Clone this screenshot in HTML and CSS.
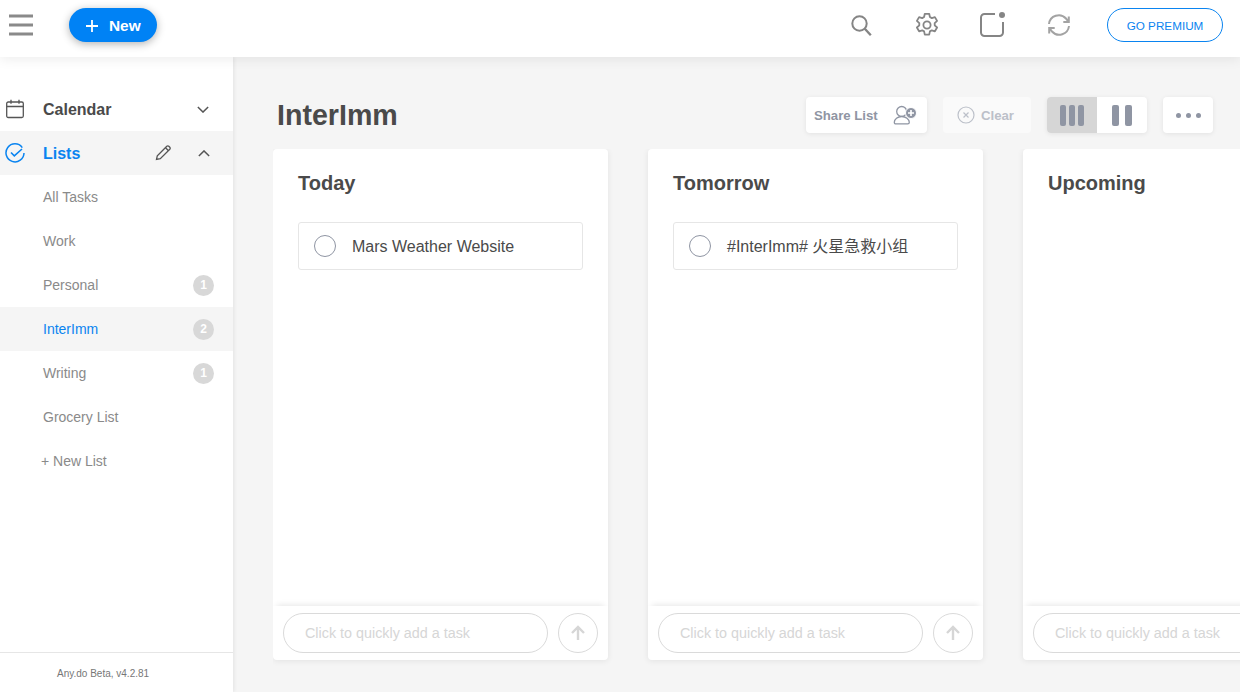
FILE: index.html
```html
<!doctype html>
<html>
    <head>
        <title>Any.do</title>
        <meta charset="utf-8">
        <link rel="stylesheet" href="styles.css">
    </head>
    <body>
        <div id="topbar">
            <svg class="burger" width="26" height="24" viewBox="0 0 26 24">
                <path d="M1 3h24M1 12h24M1 21h24" stroke="#8a8a8a" stroke-width="3" fill="none"/>
            </svg>
            <div class="new-button">
                <svg width="14" height="14" viewBox="0 0 14 14"><path d="M7 1v12M1 7h12" stroke="#fff" stroke-width="1.8" fill="none"/></svg>
                <span>New</span>
            </div>
            <div class="top-icons">
                <svg class="search-icon" width="24" height="24" viewBox="0 0 24 24" fill="none" stroke="#858585" stroke-width="2">
                    <circle cx="10.5" cy="10.5" r="7.2"/>
                    <path d="M15.8 15.8l6 6.400" stroke-width="2.400"/>
                </svg>
                <svg class="gear-icon" width="26" height="26" viewBox="0 0 26 26" fill="none" stroke="#858585" stroke-width="1.800" stroke-linejoin="round">
                    <path d="M10.8 1.8h4.4l.7 3.2 1.9 1.1 3.1-1 2.2 3.8-2.4 2.2v2.2l2.4 2.2-2.2 3.8-3.1-1-1.9 1.1-.7 3.2h-4.4l-.7-3.2-1.9-1.1-3.1 1-2.2-3.8 2.4-2.2v-2.2l-2.4-2.2 2.2-3.8 3.1 1 1.9-1.1z"/>
                    <circle cx="13" cy="13" r="3.6"/>
                </svg>
                <svg class="note-icon" width="27" height="26" viewBox="0 0 27 26" fill="none">
                    <path d="M16 2H5.500A3.500 3.500 0 0 0 2 5.500v15A3.500 3.500 0 0 0 5.500 24h15a3.500 3.500 0 0 0 3.500-3.500V10" stroke="#858585" stroke-width="2"/>
                    <circle cx="23" cy="3" r="3" fill="#858585"/>
                </svg>
                <svg class="sync-icon" width="24" height="24" viewBox="0 0 24 24" fill="none" stroke="#a3a3a3" stroke-width="2">
                    <path d="M2 11A9.800 9.800 0 0 1 19 5.500l2.500 3"/>
                    <path d="M22 13A9.800 9.800 0 0 1 5 18.500l-2.500-3"/>
                    <path d="M21.800 3.500v5.500h-5.500"/>
                    <path d="M2.200 20.500V15h5.500"/>
                </svg>
                <div class="premium">GO PREMIUM</div>
            </div>
        </div>
        <div id="page">
            <div id="sidebar">
                <div class="nav">
                    <div class="nav-head">
                        <svg class="head-icon" width="20" height="20" viewBox="0 0 20 20" fill="none" stroke="#555" stroke-width="1.300">
                            <rect x="1.700" y="3" width="16.600" height="15.500" rx="1.500"/>
                            <path d="M1.700 7.500h16.600M6 .8v4M14 .8v4"/>
                        </svg>
                        <span class="head-label">Calendar</span>
                        <svg class="chev" width="12" height="7" viewBox="0 0 14 8" fill="none" stroke="#555" stroke-width="1.700"><path d="M1 1l6 6 6-6"/></svg>
                    </div>
                    <div class="nav-head on">
                        <svg class="head-icon" width="20" height="20" viewBox="0 0 20 20" fill="none" stroke="#0a84f0" stroke-width="1.500">
                            <path d="M17.300 4.600A9 9 0 1 0 19 10"/>
                            <path d="M6 9.500l3.300 3.300L17 6" stroke-width="1.600"/>
                        </svg>
                        <span class="head-label">Lists</span>
                        <svg class="pencil" width="16" height="16" viewBox="0 0 16 16" fill="none" stroke="#555" stroke-width="1.300">
                            <path d="M1.500 14.500l.8-3.800L11.800 1.200a1.400 1.400 0 0 1 2 0l1 1a1.400 1.400 0 0 1 0 2L5.300 13.700z"/>
                            <path d="M10.500 2.700l2.800 2.800"/>
                        </svg>
                        <svg class="chev" width="12" height="7" viewBox="0 0 14 8" fill="none" stroke="#555" stroke-width="1.700"><path d="M1 7l6-6 6 6"/></svg>
                    </div>
                    <div class="nav-item">All Tasks</div>
                    <div class="nav-item">Work</div>
                    <div class="nav-item">Personal <span class="count">1</span></div>
                    <div class="nav-item on">InterImm <span class="count">2</span></div>
                    <div class="nav-item">Writing <span class="count">1</span></div>
                    <div class="nav-item">Grocery List</div>
                    <div class="nav-item new-list">+ New List</div>
                </div>
                <div class="version">Any.do Beta, v4.2.81</div>
            </div>
            <div id="main">
                <div class="main-head">
                    <div class="list-title">InterImm</div>
                    <div class="tool share">
                        Share List
                        <svg width="24" height="20" viewBox="0 0 24 20" fill="none" stroke="#8f95a3" stroke-width="1.300">
                            <circle cx="8.700" cy="6.500" r="5"/>
                            <path d="M1.300 17.300c0-3.300 3.400-5.800 7.400-5.800s7.600 2.500 7.600 5.800c0 1-.6 1.600-1.600 1.600H2.900c-1 0-1.600-.6-1.600-1.600z" fill="#fff"/>
                            <circle cx="18" cy="8" r="5.500" fill="#8f95a3" stroke="#fff" stroke-width="1"/>
                            <path d="M18 5v6M15 8h6" stroke="#fff" stroke-width="1.600"/>
                        </svg>
                    </div>
                    <div class="tool clear">
                        <svg width="18" height="18" viewBox="0 0 18 18" fill="none" stroke="#bcc0c9" stroke-width="1.200">
                            <circle cx="9" cy="9" r="8"/>
                            <path d="M6.500 6.500l5 5M11.500 6.500l-5 5"/>
                        </svg>
                        Clear
                    </div>
                    <div class="view-switch">
                        <div class="view on"><i></i><i></i><i></i></div>
                        <div class="view two"><i></i><i></i></div>
                    </div>
                    <div class="tool more"><i></i><i></i><i></i></div>
                </div>
                <div class="board">
                    <div class="column">
                        <div class="column-title">Today</div>
                        <div class="tasks">
                            <div class="task"><span class="check"></span><span class="task-text">Mars Weather Website</span></div>
                        </div>
                        <div class="quick-add">
                            <div class="quick-input">Click to quickly add a task</div>
                            <div class="quick-send">
                                <svg width="16" height="16" viewBox="0 0 16 16" fill="none" stroke="#d6d6d6" stroke-width="2.400"><path d="M8 15V2M2 8l6-6 6 6"/></svg>
                            </div>
                        </div>
                    </div>
                    <div class="column">
                        <div class="column-title">Tomorrow</div>
                        <div class="tasks">
                            <div class="task"><span class="check"></span><span class="task-text">#InterImm# 火星急救小组</span></div>
                        </div>
                        <div class="quick-add">
                            <div class="quick-input">Click to quickly add a task</div>
                            <div class="quick-send">
                                <svg width="16" height="16" viewBox="0 0 16 16" fill="none" stroke="#d6d6d6" stroke-width="2.400"><path d="M8 15V2M2 8l6-6 6 6"/></svg>
                            </div>
                        </div>
                    </div>
                    <div class="column">
                        <div class="column-title">Upcoming</div>
                        <div class="tasks"></div>
                        <div class="quick-add">
                            <div class="quick-input">Click to quickly add a task</div>
                            <div class="quick-send">
                                <svg width="16" height="16" viewBox="0 0 16 16" fill="none" stroke="#d6d6d6" stroke-width="2.400"><path d="M8 15V2M2 8l6-6 6 6"/></svg>
                            </div>
                        </div>
                    </div>
                </div>
            </div>
        </div>
    </body>
</html>
```

FILE: styles.css
```css
html, body {
    height: 100%;
}
body {
    margin: 0;
    overflow: hidden;
    display: flex;
    flex-direction: column;
    font-family: "Liberation Sans", "Noto Sans CJK SC", Arial, sans-serif;
    color: #4a4a4a;
    background-color: #F5F5F5;
}
svg {
    display: block;
    flex-shrink: 0;
}
#topbar {
    position: relative;
    z-index: 2;
    flex: 0 0 57px;
    display: flex;
    align-items: center;
    background-color: #FFFFFF;
    box-shadow: 0px 2px 12px rgba(0, 0, 0, 0.08);
}
.burger {
    margin: -7px 0 0 8px;
}
.new-button {
    display: flex;
    align-items: center;
    gap: 10px;
    height: 34px;
    width: 88px;
    margin: -7px 0 0 35px;
    padding: 1px 0 0 16px;
    box-sizing: border-box;
    border-radius: 17px;
    background-color: #0082F5;
    box-shadow: 0px 2px 9px rgba(0, 0, 0, 0.3);
    font-size: 15.4px;
    font-weight: bold;
    color: #FFFFFF;
}
.top-icons {
    margin-left: auto;
    display: flex;
    align-items: center;
    margin-top: -7px;
    padding-right: 17px;
}
.search-icon {
    margin-right: 41px;
}
.gear-icon {
    margin-right: 39px;
}
.note-icon {
    margin-right: 41px;
}
.sync-icon {
    margin-right: 36px;
}
.premium {
    width: 116px;
    height: 34px;
    line-height: 33px;
    box-sizing: border-box;
    border: 1px solid #0A84F0;
    border-radius: 17px;
    text-align: center;
    font-size: 11.7px;
    color: #0A84F0;
}
#page {
    flex: 1;
    display: flex;
    min-height: 0;
}
#sidebar {
    flex: 0 0 233px;
    display: flex;
    flex-direction: column;
    background-color: #FFFFFF;
    box-shadow: 1px 0px 4px rgba(0, 0, 0, 0.08);
    position: relative;
    z-index: 1;
}
.nav {
    flex: 1;
    padding-top: 30px;
}
.nav-head {
    display: flex;
    align-items: center;
    height: 44px;
    padding-left: 5px;
}
.nav-head.on {
    background-color: #F5F5F5;
    color: #0A84F0;
}
.head-label {
    margin: 2px 0 0 18px;
    font-size: 16px;
    font-weight: bold;
}
.head-label + .chev {
    margin-left: auto;
    margin-right: 24px;
}
.pencil {
    margin-left: auto;
    margin-right: 27px;
}
.pencil + .chev {
    margin-right: 23px;
}
.nav-item {
    display: flex;
    align-items: center;
    justify-content: space-between;
    height: 44px;
    padding: 0 19px 0 43px;
    font-size: 14px;
    color: #8A8A8A;
}
.nav-item.on {
    background-color: #F5F5F5;
    color: #0A84F0;
}
.nav-item.new-list {
    padding-left: 41px;
}
.count {
    width: 21px;
    height: 21px;
    line-height: 21px;
    border-radius: 50%;
    background-color: #D8D8D8;
    text-align: center;
    font-size: 12px;
    font-weight: bold;
    color: #FFFFFF;
}
.version {
    flex: 0 0 40px;
    border-top: 1px solid #E6E6E6;
    padding: 15px 0 0 57px;
    box-sizing: border-box;
    font-size: 10px;
    color: #777777;
}
#main {
    flex: 1;
    min-width: 0;
    padding: 40px 27px 32px 40px;
    display: flex;
    flex-direction: column;
}
.main-head {
    flex: 0 0 36px;
    display: flex;
    align-items: center;
    margin-bottom: 16px;
}
.list-title {
    margin-left: 4px;
    margin-right: auto;
    font-size: 28.6px;
    font-weight: bold;
}
.tool {
    display: flex;
    align-items: center;
    height: 36px;
    box-sizing: border-box;
    border-radius: 4px;
    background-color: #FFFFFF;
    box-shadow: 0px 1px 5px rgba(0, 0, 0, 0.08);
    font-size: 13.2px;
    font-weight: bold;
    color: #8F95A3;
}
.share {
    width: 121px;
    padding-left: 8px;
    justify-content: space-between;
    padding-right: 10px;
    margin-right: 16px;
}
.clear {
    width: 88px;
    padding-left: 14px;
    gap: 6px;
    margin-right: 16px;
    background-color: #FAFAFA;
    box-shadow: none;
    color: #BCC0C9;
}
.view-switch {
    display: flex;
    height: 36px;
    margin-right: 16px;
    border-radius: 4px;
    overflow: hidden;
    background-color: #FFFFFF;
    box-shadow: 0px 1px 5px rgba(0, 0, 0, 0.08);
}
.view {
    width: 50px;
    display: flex;
    align-items: center;
    justify-content: center;
    gap: 3px;
}
.view.on {
    background-color: #D6D6D6;
}
.view i {
    width: 6px;
    height: 21px;
    border-radius: 2px;
    background-color: #8F95A3;
}
.view.two {
    gap: 6px;
}
.view.two i {
    width: 7px;
}
.more {
    width: 50px;
    justify-content: center;
    gap: 5px;
}
.more i {
    width: 5px;
    height: 5px;
    border-radius: 50%;
    background-color: #8F95A3;
}
.board {
    flex: 1;
    min-height: 0;
    display: flex;
    gap: 40px;
    margin-right: -27px;
    overflow: hidden;
    padding: 0 0 8px 0;
    margin-bottom: -8px;
}
.column {
    flex: 0 0 335px;
    display: flex;
    flex-direction: column;
    border-radius: 4px;
    background-color: #FFFFFF;
    box-shadow: 0px 1px 6px rgba(0, 0, 0, 0.08);
}
.column-title {
    padding: 23px 25px 0;
    height: 50px;
    box-sizing: border-box;
    font-size: 20px;
    font-weight: bold;
}
.tasks {
    flex: 1;
    padding: 23px 25px 0;
}
.task {
    display: flex;
    align-items: center;
    height: 48px;
    box-sizing: border-box;
    padding-left: 15px;
    border: 1px solid #E6E6E6;
    border-radius: 3px;
    font-size: 16px;
    line-height: 20px;
}
.task-text {
    margin-top: 2px;
}
.check {
    width: 20px;
    height: 20px;
    margin-right: 16px;
    border: 1px solid #8F95A3;
    border-radius: 50%;
}
.quick-add {
    flex: 0 0 54px;
    display: flex;
    align-items: center;
    gap: 10px;
    padding: 0 10px;
    box-sizing: border-box;
    box-shadow: 0px -5px 6px -4px rgba(0, 0, 0, 0.1);
}
.quick-input {
    width: 265px;
    height: 40px;
    line-height: 38px;
    box-sizing: border-box;
    padding-left: 21px;
    border: 1px solid #DADADA;
    border-radius: 20px;
    font-size: 14.35px;
    color: #D6D6D6;
}
.quick-send {
    width: 40px;
    height: 40px;
    box-sizing: border-box;
    display: flex;
    align-items: center;
    justify-content: center;
    border: 1px solid #DADADA;
    border-radius: 50%;
}
```
